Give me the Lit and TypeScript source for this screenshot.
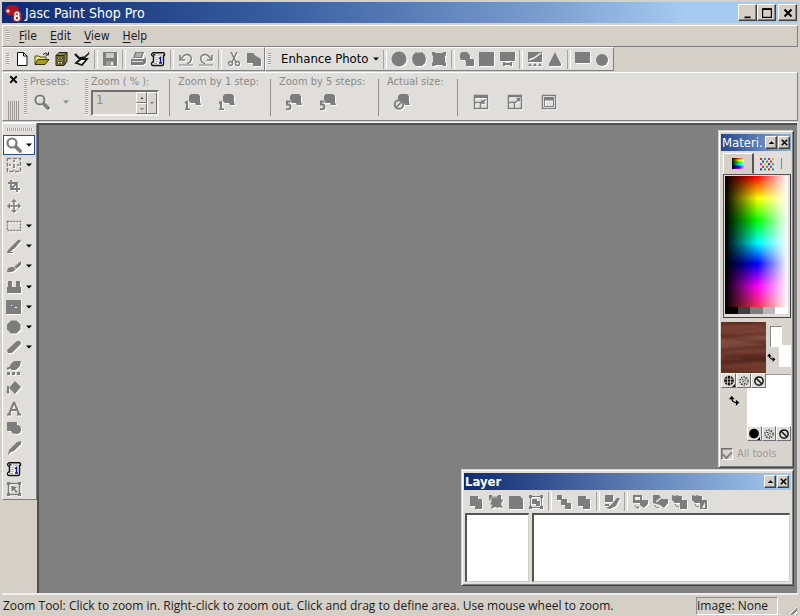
import { LitElement, html, css, svg, nothing, type TemplateResult } from "lit";
import { customElement, property } from "lit/decorators.js";

const G = "#7d7d7d";

const lens = svg`<circle cx="6" cy="6" r="4.500" fill="none" stroke=${G} stroke-width="2.200"/><path d="M10 10l4 4" stroke=${G} stroke-width="3.800" stroke-linecap="round"/>`;
const stepShape = svg`<path d="M6 0h7l2 2v6l1 3h-5l-1-2H6L4 7V2z" fill=${G}/>`;
const scroll = svg`<path d="M3 1.700h10.500q1.500 1 1 2.600h-1V13q0 1.500-1.500 1.500H2.500q-2-1.500 0-3.500H3.500V5H2.500Q.5 3.500 3 1.700z" fill="#f6f6f6" stroke="#111" stroke-width="1.400" stroke-linejoin="round"/><path d="M3 3.300h2V5" fill="none" stroke="#111"/><path d="M7 4h5M5.500 6.500h2M5.500 8.500h2M5.500 10.500h2M4 12.500h3" stroke="#9a9a9a"/><path d="M9 7.500l1.500-1v5.500M9 12h3" fill="none" stroke="#11118c" stroke-width="1.500"/>`;
const ban = svg`<circle cx="8" cy="8" r="5.500" fill="none" stroke="#111" stroke-width="2"/><path d="M4 4l8 8" stroke="#111" stroke-width="2"/>`;
const texture = svg`<circle cx="8" cy="8" r="5.500" fill="none" stroke="#222" stroke-width="1.500" stroke-dasharray="2 1.500"/><path d="M5 6h2M9 5h2M6 9h2M10 8h1M8 11h2M8 7l1 1M5 11l1 1" stroke="#222" stroke-width="1.300"/>`;
const swap = svg`<path d="M4 4q0 7 7 7" fill="none" stroke="#000" stroke-width="1.800"/><path d="M0 6l4-5 4 5zM10 7l5 4-5 5z" fill="#000"/>`;
const dots = () => {
  const colors = ["#e02020", "#1fae30", "#2030d0", "#e0c000", "#c020b0", "#10a0b0"];
  return [0, 1, 2, 3, 4].flatMap((r) =>
    (r % 2 ? [0, 1, 2] : [0, 1, 2, 3]).map((c) => svg`<rect x=${1 + c * 4 + (r % 2 ? 2 : 0)} y=${2 + r * 2.6} width="2" height="2" fill=${colors[(r * 2 + c * 5) % 6]}/>`)
  );
};

const ICONS: Record<string, () => unknown> = {
  new: () => svg`<path d="M3.500 1.500h6l3.500 3.500v9.500h-9.500z" fill="#fff" stroke="#111"/><path d="M9.500 1.500V5H13" fill="none" stroke="#111"/>`,
  open: () => svg`<path d="M1 13V5h4l1 1h6v3" fill="#e8e070" stroke="#54500a"/><path d="M1 13.500l3-5h11l-4 5z" fill="#a8a018" stroke="#333006"/><path d="M9 3.500q3-3 5 0M14.500 1v3h-3" fill="none" stroke="#222"/>`,
  cabinet: () => svg`<path d="M2 4.500l3-3h8v9l-3 4H2z" fill="#8f8a2c" stroke="#222"/><path d="M10 4.500v10M2 4.500h8l3-3" stroke="#222" fill="none"/><path d="M3.500 6h5v2h-5zM3.500 10.500h5v2.500h-5z" fill="#fff" stroke="#444"/><path d="M5 7h2M5 12h2" stroke="#111"/>`,
  scanner: () => svg`<path d="M1 3l4 4 6 1" fill="none" stroke="#111" stroke-width="2.200"/><path d="M5 7l6-1 3-3" fill="none" stroke="#111" stroke-width="1.500"/><path d="M2 12l5-4h6l-5 6z" fill="#eee" stroke="#111" stroke-width="1.800"/><path d="M14 1q2 1 0 3" stroke="#111" fill="none"/>`,
  save: () => svg`<path d="M1 1h14v14H2l-1-1z" fill=${G}/><path d="M4 2h8v5H4z" fill="#c9c7c3"/><path d="M4 10h8v5H4z" fill="#9a9a98"/><path d="M9 11h2v3H9z" fill="#eee"/>`,
  print: () => svg`<path d="M5 1h9l-2 6H3zM1 8h13l2-2v6l-3 2H1z" fill=${G}/><path d="M6 3h6M5 5h6M2 10.500h11" stroke="#e4e2de"/>`,
  script: () => scroll,
  undo: () => svg`<path d="M2 4v5h5" fill="none" stroke=${G} stroke-width="1.500"/><path d="M3 8q4-6 8-4t1 7l-3 2" fill="none" stroke=${G} stroke-width="1.500"/><path d="M1 14h14" stroke=${G}/>`,
  redo: () => svg`<path d="M14 4v5H9" fill="none" stroke=${G} stroke-width="1.500"/><path d="M13 8q-4-6-8-4t-1 7l3 2" fill="none" stroke=${G} stroke-width="1.500"/><path d="M1 14h14" stroke=${G}/>`,
  cut: () => svg`<path d="M5 1l5 10M11 1L6 11" stroke=${G} stroke-width="1.500"/><circle cx="4.500" cy="12.500" r="2" fill="none" stroke=${G} stroke-width="1.300"/><circle cx="11.500" cy="12.500" r="2" fill="none" stroke=${G} stroke-width="1.300"/>`,
  copy: () => svg`<path d="M1 2h6l3 3 5 3v7H7v-3H1z" fill=${G}/>`,
  disc: () => svg`<circle cx="8" cy="8" r="7.500" fill=${G}/>`,
  disc2: () => svg`<path d="M5 1l2 1 1-1 1 1 2-1 3 3 1 4-1 4-3 3H5l-3-3-1-4 1-4z" fill=${G}/>`,
  barrel: () => svg`<path d="M1 1h3v1h8V1h3v3l-1 1v6l1 1v3h-3l-1-1H5l-1 1H1v-3l1-1V5L1 4z" fill=${G}/>`,
  deform: () => svg`<path d="M3 1h5l3 3v4h4v7H7v-4L6 9H2L1 7V3z" fill=${G}/>`,
  square: () => svg`<path d="M0 1h15v14H0z" fill=${G}/>`,
  screen: () => svg`<path d="M1 1h15v9H1zM4 11h2v1h5v-1h2v4h-2v-1H6v1H4z" fill=${G}/>`,
  gradient: () => svg`<path d="M1 1h14v10H1z" fill=${G}/><path d="M2 9l5-2 7-5" stroke="#eee" fill="none" stroke-width="1.500"/><path d="M1 15l2-3 2 3zM6 15l2-3 2 3zM11 15l2-3 2 3z" fill=${G}/>`,
  triangle: () => svg`<path d="M8 1l6 12v2H2v-2z" fill=${G}/>`,
  rect: () => svg`<path d="M0 1h15v11H0z" fill=${G}/>`,
  octagon: () => svg`<path d="M5 1.500h5.500l4 4v5l-4 4H5l-4-4v-5z" fill=${G}/>`,
  ball: () => svg`<circle cx="7" cy="9" r="6" fill=${G}/>`,
  zoom: () => lens,
  step1: () => svg`${stepShape}<path d="M0 9l2-1v8" fill="none" stroke=${G} stroke-width="2"/><path d="M0 15.200h5" stroke=${G} stroke-width="1.600"/>`,
  step5: () => svg`${stepShape}<path d="M-1 6h6v10h-6z" fill="#e0deda"/><path d="M4.500 7.500H1v3h1q2.500 0 2.500 2.300T2 15.200H0" fill="none" stroke=${G} stroke-width="2"/>`,
  actual: () => svg`${stepShape}<circle cx="5" cy="10.500" r="4.300" fill="#e0deda" stroke=${G} stroke-width="1.900"/><path d="M2 13.500l6-6" stroke=${G} stroke-width="1.600"/>`,
  fit1: () => svg`<path d="M1.500 1.500h13v13h-13z" fill="none" stroke=${G} stroke-width="1.500"/><path d="M1 3h14" stroke=${G} stroke-width="2"/><path d="M2 8.500h5.500V14M12.500 5.500l-3 3M9 6v3h3" fill="none" stroke=${G} stroke-width="1.500"/>`,
  fit2: () => svg`<path d="M1.500 1.500h13v13h-13z" fill="none" stroke=${G} stroke-width="1.500"/><path d="M1 2.500h14" stroke=${G} stroke-width="1.500"/><path d="M2 8.500h5.500V14M8.500 8.500l4-4M9.500 4.500h3v3" fill="none" stroke=${G} stroke-width="1.500"/>`,
  fit3: () => svg`<path d="M1.500 1.500h13v13h-13z" fill="none" stroke=${G} stroke-width="1.500"/><path d="M3 4.500h10" stroke=${G} stroke-width="3"/><path d="M3.500 6h9v6.500h-9z" fill="none" stroke=${G}/>`,
  pan: () => svg`<path d="M1.500 1.500h13v13h-13z" fill="none" stroke=${G} stroke-width="1.500" stroke-dasharray="4 1.500"/><path d="M8 3v2M8 7v4M3 8h2M11 8h2M8 12.500v1" stroke=${G} stroke-width="1.700"/>`,
  crop: () => svg`<path d="M5 2v9h9M2 5h9v9M5 11l6-6" fill="none" stroke=${G} stroke-width="1.800"/>`,
  move: () => svg`<path d="M8 2v12M2 8h12" stroke=${G} stroke-width="1.500"/><path d="M8 1l3 3H5zM8 15l3-3H5zM1 8l3-3v6zM15 8l-3-3v6z" fill=${G}/>`,
  marquee: () => svg`<path d="M1.500 3.500h13v9h-13z" fill="none" stroke=${G} stroke-width="1.500" stroke-dasharray="2 1"/>`,
  dropper: () => svg`<path d="M1 14l2-3 9-9q2-1 3 1l-6 7-5 4z" fill=${G}/><path d="M1 14.500h6" stroke=${G}/>`,
  brush: () => svg`<path d="M1 13q1-4 4-4l3 0 7-6v4l-5 4q-3 4-9 3z" fill=${G}/><path d="M7 8l3 3" stroke="#e4e2de"/>`,
  clone: () => svg`<path d="M2 2h4v6h4V2h4v6h1v6H1V8h1z" fill=${G}/>`,
  scratch: () => svg`<path d="M0 1h15v14H0z" fill=${G}/><path d="M5 6h1v1H5zM9 8h2v1H9z" fill="#fff"/>`,
  eraser: () => svg`<path d="M1 11L11 2h3l1 3-9 9H2z" fill=${G}/>`,
  dodge: () => svg`<path d="M4 5l4-4h7l-1 5-4 4H5zM1 12h3v3H1zM6 12h3v3H6zM11 12h3v3h-3z" fill=${G}/><path d="M1 9l4-2" stroke=${G} stroke-width="2"/>`,
  fill: () => svg`<path d="M9 1l6 6-6 7-6-6z" fill=${G}/><path d="M2 6v6" stroke=${G} stroke-width="2"/><circle cx="2" cy="12" r="1.500" fill=${G}/>`,
  text: () => svg`<path d="M8 2L3 14M8 2l5 12M5 10h6M1 14.500h4M11 14.500h4" fill="none" stroke=${G} stroke-width="2"/>`,
  shape: () => svg`<path d="M1 2h10v3q4 0 4 5 0 4-5 4-4 0-5-3H1z" fill=${G}/>`,
  pen: () => svg`<path d="M2 15l1-5 8-8 4-1v3l-7 7-3 1z" fill=${G}/>`,
  select: () => svg`<path d="M2.500 2.500h11v11h-11z" fill="none" stroke=${G} stroke-width="1.500"/><path d="M1 1h3v3H1zM12 1h3v3h-3zM1 12h3v3H1zM12 12h3v3h-3zM5 5l6 1-2 2 3 3-2 1-2-3-2 2z" fill=${G}/>`,
  layer: () => svg`<path d="M2 2h8v3h4v10H7v-3H2z" fill=${G}/>`,
  layer2: () => svg`<path d="M1 1h3v1h6V1h3v4l2 1-2 4 2 4-4-1-1 1-3-1-4 2 1-4-2-1 2-3-3-1z" fill=${G}/><path d="M4 3h5M3 4v2" stroke="#e8e6e2"/>`,
  page: () => svg`<path d="M1 2h11l3 3v10H1z" fill=${G}/>`,
  group: () => svg`<path d="M2.500 2.500h11v11h-11z" fill="none" stroke=${G}/><path d="M1 1h3v3H1zM12 1h3v3h-3zM1 12h3v3H1zM12 12h3v3h-3zM4 5h5v2h3v5H8v-2H4z" fill=${G}/>`,
  chain: () => svg`<path d="M1 1h5v4h5v4h4v6H9v-4H5V6H1z" fill=${G}/>`,
  edit: () => svg`<path d="M1 1h8v7H1zM2 14l5-3 6-7h3l-4 8-6 3z" fill=${G}/><path d="M1 11h4" stroke=${G} stroke-width="2"/>`,
  mask1: () => svg`<path d="M1 1h9v8H1zM8 6h8v4l-4 4-4-3z" fill=${G}/><path d="M3 3h5v3H3z" fill="#eee"/><path d="M3 11q0 3 4 3M6 12v3" stroke=${G} fill="none"/>`,
  mask2: () => svg`<path d="M1 1h6l3 4h6v4l-4 5-4-3-4-1-3-1z" fill=${G}/><path d="M4 8l5-4" stroke="#eee" stroke-width="1.500"/><path d="M3 11q0 3 4 3" stroke=${G} fill="none"/>`,
  mask3: () => svg`<path d="M0 1l3 1 2-1 2 1h3v4h5v9H8V9H3L0 6z" fill=${G}/><path d="M3 10q0 3 4 3" stroke=${G} fill="none"/>`,
  mask4: () => svg`<path d="M0 1l3 1 2-1 2 1h3v4h5v9H8V9H3L0 6z" fill=${G}/><path d="M13 8l-3 6h3z" fill="#eee"/><path d="M3 10q0 3 4 3" stroke=${G} fill="none"/>`,
  ban: () => ban,
  texture: () => texture,
  swap: () => swap,
  pattern: () => svg`<circle cx="8" cy="7.500" r="6.500" fill="#111"/><path d="M6 1v13M10 1v13M2 5.500h12M2 9.500h12" stroke="#ddd"/><path d="M16 12v4h-4z" fill="#000"/>`,
  solid: () => svg`<circle cx="8" cy="7.500" r="6.500" fill="#000"/><path d="M16 12v4h-4z" fill="#000"/>`,
  dots,
  logo: () => svg`<path d="M0 3l4-3 6 0 4 3-1 5-4 3-3-1-3 1-3-4z" fill="#a8141c"/><path d="M1 6h4M3 4v4" stroke="#fff"/><path d="M10.500 6.500h3l2 2v2l-1 1 1 1v2l-2 1.500h-3l-2-1.500v-2l1-1-1-1v-2z" fill="#d02028" stroke="#d02028" stroke-width="1.500"/><circle cx="12" cy="9" r="1.800" fill="none" stroke="#fff" stroke-width="1.600"/><circle cx="12" cy="13" r="2.100" fill="none" stroke="#fff" stroke-width="1.600"/>`,
  min: () => svg`<path d="M4 12h7v2H4z" fill="#000"/>`,
  max: () => svg`<path d="M3 3.500h10v9.500H3z" fill="none" stroke="#000" stroke-width="1.300"/><path d="M2.500 3.500h11" stroke="#000" stroke-width="2"/>`,
  close: () => svg`<path d="M4 4l8 8M12 4l-8 8" stroke="#000" stroke-width="2.200"/>`,
  up: () => svg`<path d="M4 10l4-4 4 4z" fill="#000"/>`,
  down: () => svg`<path d="M2 5h12l-6 6z" fill="currentColor"/>`,
};

@customElement("psp-icon")
class PspIcon extends LitElement {
  @property() name = "";
  static styles = css`
    :host { display: block; width: 16px; height: 16px; flex: none; }
    svg { display: block; width: 100%; height: 100%; overflow: visible; }
  `;
  render() {
    return html`<svg viewBox="0 0 16 16" aria-hidden="true">${ICONS[this.name]?.()}</svg>`;
  }
}

const SEP = "|";
const STANDARD = ["new", "open", "cabinet", "scanner", SEP, "save", SEP, "print", "script", SEP, "undo", "redo", SEP, "cut", "copy"];
const PHOTO = [SEP, "disc", "disc2", "barrel", SEP, "deform", "square", "screen", SEP, "gradient", "triangle", SEP, "rect", "ball"];
const LAYER = ["layer", "layer2", "page", "group", SEP, "chain", "layer", SEP, "edit", SEP, "mask1", "mask2", "mask3", "mask4"];
const COLORED = new Set(["new", "open", "cabinet", "scanner", "script"]);
const TOOLS: [string, boolean][] = [
  ["zoom", true], ["pan", true], ["crop", false], ["move", false], ["marquee", true], ["dropper", true],
  ["brush", true], ["clone", true], ["scratch", true], ["octagon", true], ["eraser", true], ["dodge", false],
  ["fill", false], ["text", false], ["shape", false], ["pen", false], ["script", false], ["select", false],
];

@customElement("app-root")
class AppRoot extends LitElement {
  static styles = css`
    :host { display: block; font-family: "DejaVu Sans Condensed", "DejaVu Sans", sans-serif; font-size: 13px; line-height: 16px; color: #1c1c1c; }
    * { box-sizing: border-box; }
    button { font: inherit; color: inherit; margin: 0; padding: 0; border: 0; background: none; display: flex; align-items: center; justify-content: center; }
    .app { display: flex; flex-direction: column; min-height: 100vh; background: #d4d0c8; padding: 2px 2px 0; overflow: hidden; }
    .titlebar { display: flex; align-items: center; height: 21px; padding: 0 1px 0 3px; gap: 2px; background: linear-gradient(to right, #0e2a72, #3a5ea2 35%, #7799cb 66%, #a6caf0 86%); color: #fff; }
    .titlebar h1 { flex: 1; margin: 0 0 0 2px; font-size: 14px; font-weight: 400; }
    .win { width: 19px; height: 17px; background: #d4d0c8; border: 1px solid; border-color: #fff #404040 #404040 #fff; box-shadow: inset -1px -1px #808080; }
    .win psp-icon { width: 14px; height: 14px; }
    .group { display: flex; }
    .raised { border: 1px solid; border-color: #fff #808080 #808080 #fff; }
    .menubar { display: flex; align-items: center; height: 22px; margin-top: 2px; padding-left: 3px; gap: 13px; font-size: 12px; }
    .menubar .grip { margin-right: -3px; }
    .menubar u { text-underline-offset: 2px; }
    .grip { width: 3px; height: 12px; flex: none; background: repeating-linear-gradient(#a09e9a 0 1px, #f2f0ec 1px 2px); }
    .bars { display: flex; height: 24px; }
    .bar { display: flex; align-items: center; background: #e0deda; }
    .bar.first { padding-left: 3px; }
    .bar.first .grip { margin-right: 3px; }
    .bar.second { padding-left: 2px; }
    .cell { width: 20px; height: 20px; flex: none; }
    .gray { filter: drop-shadow(1px 1px 0 #fff); }
    .sep { width: 8px; height: 19px; flex: none; display: flex; justify-content: center; }
    .sep::before { content: ""; width: 2px; border-left: 1px solid #a6a4a0; border-right: 1px solid #fff; }
    .enhance { gap: 3px; padding: 0 1px 0 10px; color: #000; }
    .arrow { width: 8px; height: 8px; }
    .options { display: flex; height: 49px; background: #e0deda; color: #8a8a88; margin-top: 1px; }
    .handle { width: 20px; display: flex; flex-direction: column; align-items: center; justify-content: space-between; }
    .handle psp-icon { width: 13px; height: 13px; }
    .ridge { width: 11px; height: 19px; background: repeating-linear-gradient(to right, #9c9a96 0 1px, #e0deda 1px 2px); }
    .section { display: flex; flex-direction: column; padding: 2px 8px 0; }
    .presets { display: grid; grid-template-columns: 3px 1fr; column-gap: 3px; width: 62px; padding: 2px 0 0 1px; }
    .presets .grip, .zoomby .grip { height: 36px; margin-top: 4px; }
    .zoomby { display: grid; grid-template-columns: 3px 1fr; column-gap: 3px; width: 85px; padding: 2px 8px 0 0; }
    .step1 { width: 101px; }
    .step5 { width: 108px; }
    .actual { width: 79px; }
    .line { background: linear-gradient(#929090, #929090) right 6px / 1px 37px no-repeat; }
    .fits { display: flex; gap: 18px; padding: 21px 0 0 15px; align-items: flex-start; }
    .label { display: block; white-space: nowrap; line-height: 14px; font-size: 11px; }
    .icons { display: flex; gap: 18px; align-items: center; padding: 5px 0 0 7px; }
    .presets .icons { padding-left: 4px; gap: 12px; }
    .spin { display: flex; width: 68px; height: 26px; margin-top: 1px; background: #d8d5ce; border: 2px solid; border-color: #707070 #f4f2ee #f4f2ee #707070; }
    .spin input { flex: 1; min-width: 0; border: 0; background: none; font: inherit; color: #8a8a88; padding: 0 3px 6px; }
    .spinners { display: grid; grid-template: 1fr 1fr / 11px 10px; }
    .spinners button { border: 1px solid; border-color: #fff #707070 #707070 #fff; }
    .spinners button:last-child { grid-area: 1 / 2 / 3 / 3; }
    .spinners button:first-child { grid-area: 1 / 1; }
    .spinners psp-icon { width: 6px; height: 6px; }
    .body { display: flex; flex: 1; border-top: 1px solid #fff; margin-top: 1px; }
    .side { width: 35px; }
    .tools { background: #e0deda; height: 377px; border: 1px solid; border-color: #fff #808080 #808080 #fff; display: flex; flex-direction: column; }
    .tools .top { width: 26px; height: 3px; margin: 4px 0 4px 4px; background: repeating-linear-gradient(to right, #a09e9a 0 1px, #f2f0ec 1px 2px); flex: none; }
    .list { flex: 1; display: grid; grid-auto-rows: 1fr; color: #000; }
    .tool { justify-content: flex-start; width: 32px; padding-left: 3px; gap: 3px; }
    .tool.on { background: #fff; border: 1px solid #2b4a96; padding-left: 2px; }
    .canvas { flex: 1; position: relative; background: #808080; border: 1px solid; border-width: 2px 0 0 2px; border-color: #505050; min-height: 460px; margin-right: 1px; }
    .status { display: flex; align-items: center; justify-content: space-between; height: 23px; border-top: 2px solid #f0eeea; padding: 0 1px; font-family: "Open Sans", "Noto Sans", sans-serif; font-size: 12px; white-space: nowrap; }
    .image { border: 1px solid; border-color: #909090 #fff #fff #909090; width: 82px; height: 18px; line-height: 16px; margin-right: 9px; }
    .right { display: flex; align-items: center; }
    .size { width: 10px; height: 10px; align-self: flex-end; background: repeating-linear-gradient(135deg, #fff 0 1px, #8a8884 1px 3px, #d4d0c8 3px 4px); clip-path: polygon(100% 0, 100% 100%, 0 100%); }
    .float { position: absolute; background: #e0deda; border: 1px solid; border-color: #d4d0c8 #404040 #404040 #d4d0c8; box-shadow: inset 1px 1px #fff, inset -1px -1px #808080; padding: 3px 2px; }
    .float header { display: flex; align-items: center; height: 17px; background: linear-gradient(to right, #0e2a72, #a6caf0); color: #fff; padding: 0 2px 0 1px; gap: 1px; }
    .float h2 { flex: 1; min-width: 0; margin: 0; font-size: 13px; font-weight: 700; overflow: hidden; white-space: nowrap; }
    .float .win { width: 12px; height: 13px; flex: none; }
    .float .win psp-icon { width: 11px; height: 11px; }
    .material { top: 5px; right: 3px; width: 76px; background: #d8d5ce; }
    .material header { background: linear-gradient(to right, #23458c, #8fb0dc); padding-right: 1px; }
    .material h2 { font-weight: 400; }
    .tabs { display: flex; height: 23px; padding: 2px 2px 0; background: #e0deda; }
    .tab { flex: 1; }
    .tab.on { background: #d4d0c8; border: 1px solid; border-color: #fff #555 transparent #fff; border-right-width: 2px; }
    .rainbow { width: 12px; height: 11px; background: linear-gradient(to right, #000, transparent 60%, #fffa), linear-gradient(red, yellow, lime, cyan, blue, magenta); }
    .tab.end { flex: 0 0 8px; height: 11px; align-self: center; border-left: 1px solid #888; }
    .picker { border: 1px solid; border-color: #555 #404040 #404040 #555; background: #e0deda; padding: 1px 2px 3px 1px; height: 144px; display: flex; flex-direction: column; margin: 0 0 4px 2px; }
    .spectrum { flex: 1; background: linear-gradient(to right, #000, rgba(0, 0, 0, 0) 52%, rgba(255, 255, 255, 0) 52%, #fff), linear-gradient(red, yellow 17%, lime 34%, cyan 51%, blue 67%, magenta 84%, #f03050); }
    .grays { display: flex; height: 7px; }
    .grays i { flex: 1; }
    .g0 { background: #000; } .g1 { background: #3e3e3e; } .g2 { background: #7c7c7c; } .g3 { background: #b8b8b8; } .g4 { background: #fff; }
    .swatches { display: grid; grid-template: 51px 15px 38px 15px / 26px 19px 25px; }
    .wood { grid-area: 1 / 1 / 2 / 3; background: repeating-linear-gradient(176deg, #3a120c33 0 2px, #a0604826 5px 7px, transparent 9px 13px), repeating-linear-gradient(8deg, #2e100833 0 3px, transparent 7px 17px), linear-gradient(170deg, #6a3429, #7e483c 40%, #5e2c22 70%, #76402f); }
    .modes { display: grid; grid-template-columns: repeat(3, 1fr); z-index: 1; background: #e0deda; }
    .modes button { border: 1px solid; border-color: #fff #707070 #707070 #fff; }
    .modes psp-icon { width: 12px; height: 12px; }
    .m1 { grid-area: 2 / 1 / 3 / 3; }
    .m2 { grid-area: 4 / 2 / 5 / 4; }
    .back { grid-area: 2 / 2 / 5 / 4; background: #fff; border-top: 1px solid #999; margin-top: 1px; }
    .mini { grid-area: 1 / 3; display: grid; grid-template: 19px 2px 20px / 9px 3px 9px; padding: 4px 0 0 4px; }
    .mini .a { grid-area: 1 / 1 / 3 / 3; background: #fff; border: 1px solid; border-color: #888 transparent transparent #888; }
    .mini .b { grid-area: 2 / 2 / 4 / 4; background: #fff; }
    .mini psp-icon { grid-area: 3 / 1; width: 9px; height: 9px; align-self: center; margin-left: -3px; }
    .exchange { grid-area: 3 / 1; margin: 7px 0 0 8px; }
    .exchange psp-icon { width: 11px; height: 11px; }
    .all { display: flex; align-items: center; gap: 4px; color: #9c9a96; font-size: 11px; padding: 5px 0 2px; }
    .all input { appearance: none; width: 12px; height: 12px; margin: 0; border: 1px solid; border-color: #707070 #fff #fff #707070; box-shadow: inset 1px 1px #999; display: grid; place-items: center; }
    .all input:checked::before { content: ""; width: 7px; height: 4px; border: solid #808080; border-width: 0 0 2px 2px; transform: rotate(-45deg); }
    .layers { right: 3px; bottom: 7px; width: 333px; max-width: 100%; height: 117px; display: flex; flex-direction: column; }
    .strip { display: flex; align-items: center; height: 23px; padding-left: 2px; }
    .panes { flex: 1; display: flex; gap: 3px; padding: 0 1px; }
    .pane { background: #fff; border: 1px solid; border-width: 2px 1px 1px 2px; border-color: #555 #d4d0c8 #d4d0c8 #555; flex: 1; }
    .pane.names { flex: 0 0 64px; }
  `;

  private bar(items: string[]): TemplateResult[] {
    return items.map((n) =>
      n === SEP
        ? html`<span class="sep"></span>`
        : html`<button class="cell" aria-label=${n}><psp-icon class=${COLORED.has(n) ? "" : "gray"} name=${n}></psp-icon></button>`
    );
  }

  private win(n: string) {
    return html`<button class="win" aria-label=${n}><psp-icon name=${n}></psp-icon></button>`;
  }

  private icon(n: string) {
    return html`<button aria-label=${n}><psp-icon class="gray" name=${n}></psp-icon></button>`;
  }

  private modes(cls: string, first: string) {
    return html`<div class="modes ${cls}">${[first, "texture", "ban"].map((n) => html`<button aria-label=${n}><psp-icon name=${n}></psp-icon></button>`)}</div>`;
  }

  render() {
    return html`<div class="app">
      <header class="titlebar"><psp-icon name="logo"></psp-icon><h1>Jasc Paint Shop Pro</h1>
        <div class="group">${this.win("min")}${this.win("max")}</div>${this.win("close")}
      </header>
      <nav class="menubar raised"><span class="grip"></span>
        ${["File", "Edit", "View", "Help"].map((m) => html`<button><span><u>${m[0]}</u>${m.slice(1)}</span></button>`)}
      </nav>
      <div class="bars">
        <div class="bar first raised"><span class="grip"></span>${this.bar(STANDARD)}</div>
        <div class="bar second raised"><span class="grip"></span>
          <button class="enhance">Enhance Photo<psp-icon class="arrow" name="down"></psp-icon></button>${this.bar(PHOTO)}
        </div>
      </div>
      <section class="options raised">
        <div class="handle"><button aria-label="close"><psp-icon name="close"></psp-icon></button><span class="ridge"></span></div>
        <div class="presets"><span class="grip"></span>
          <div><div class="label">Presets:</div><div class="icons">${this.icon("zoom")}<psp-icon class="arrow" name="down"></psp-icon></div></div>
        </div>
        <div class="zoomby line"><span class="grip"></span>
          <div><label class="label" for="zoom">Zoom ( % ):</label>
            <div class="spin"><input id="zoom" value="1" />
              <div class="spinners"><button aria-label="increase"><psp-icon name="up"></psp-icon></button><button aria-label="decrease"><psp-icon name="down"></psp-icon></button><button aria-label="choose"><psp-icon name="down"></psp-icon></button></div>
            </div>
          </div>
        </div>
        <div class="section line step1"><div class="label">Zoom by 1 step:</div><div class="icons">${this.icon("step1")}${this.icon("step1")}</div></div>
        <div class="section line step5"><div class="label">Zoom by 5 steps:</div><div class="icons">${this.icon("step5")}${this.icon("step5")}</div></div>
        <div class="section line actual"><div class="label">Actual size:</div><div class="icons">${this.icon("actual")}</div></div>
        <div class="fits">${["fit1", "fit2", "fit3"].map((n) => this.icon(n))}</div>
      </section>
      <div class="body">
        <aside class="side"><div class="tools"><span class="top"></span>
          <div class="list">${TOOLS.map(([n, more], i) => html`<button class="tool ${i === 0 ? "on" : ""}" aria-label=${n}>
            <psp-icon class=${n === "script" ? "" : "gray"} name=${n}></psp-icon>${more ? html`<psp-icon class="arrow" name="down"></psp-icon>` : nothing}</button>`)}</div>
        </div></aside>
        <main class="canvas">
          <section class="float material">
            <header><h2>Materi.</h2>${this.win("up")}${this.win("close")}</header>
            <div class="tabs"><button class="tab on" aria-label="rainbow"><span class="rainbow"></span></button><button class="tab" aria-label="swatches"><psp-icon name="dots"></psp-icon></button><span class="tab end"></span></div>
            <div class="picker"><div class="spectrum"></div><div class="grays">${[0, 1, 2, 3, 4].map((n) => html`<i class="g${n}"></i>`)}</div></div>
            <div class="swatches">
              <div class="wood"></div>
              <div class="mini"><span class="a"></span><span class="b"></span><psp-icon name="swap"></psp-icon></div>
              <div class="back"></div>
              ${this.modes("m1", "pattern")}
              <div class="exchange"><psp-icon name="swap"></psp-icon></div>
              ${this.modes("m2", "solid")}
            </div>
            <label class="all"><input type="checkbox" checked />All tools</label>
          </section>
          <section class="float layers">
            <header><h2>Layer</h2>${this.win("up")}${this.win("close")}</header>
            <div class="strip">${this.bar(LAYER)}</div>
            <div class="panes"><div class="pane names"></div><div class="pane"></div></div>
          </section>
        </main>
      </div>
      <footer class="status">
        <span>Zoom Tool: Click to zoom in. Right-click to zoom out. Click and drag to define area. Use mouse wheel to zoom.</span>
        <span class="right"><span class="image">Image: None</span><span class="size"></span></span>
      </footer>
    </div>`;
  }
}
